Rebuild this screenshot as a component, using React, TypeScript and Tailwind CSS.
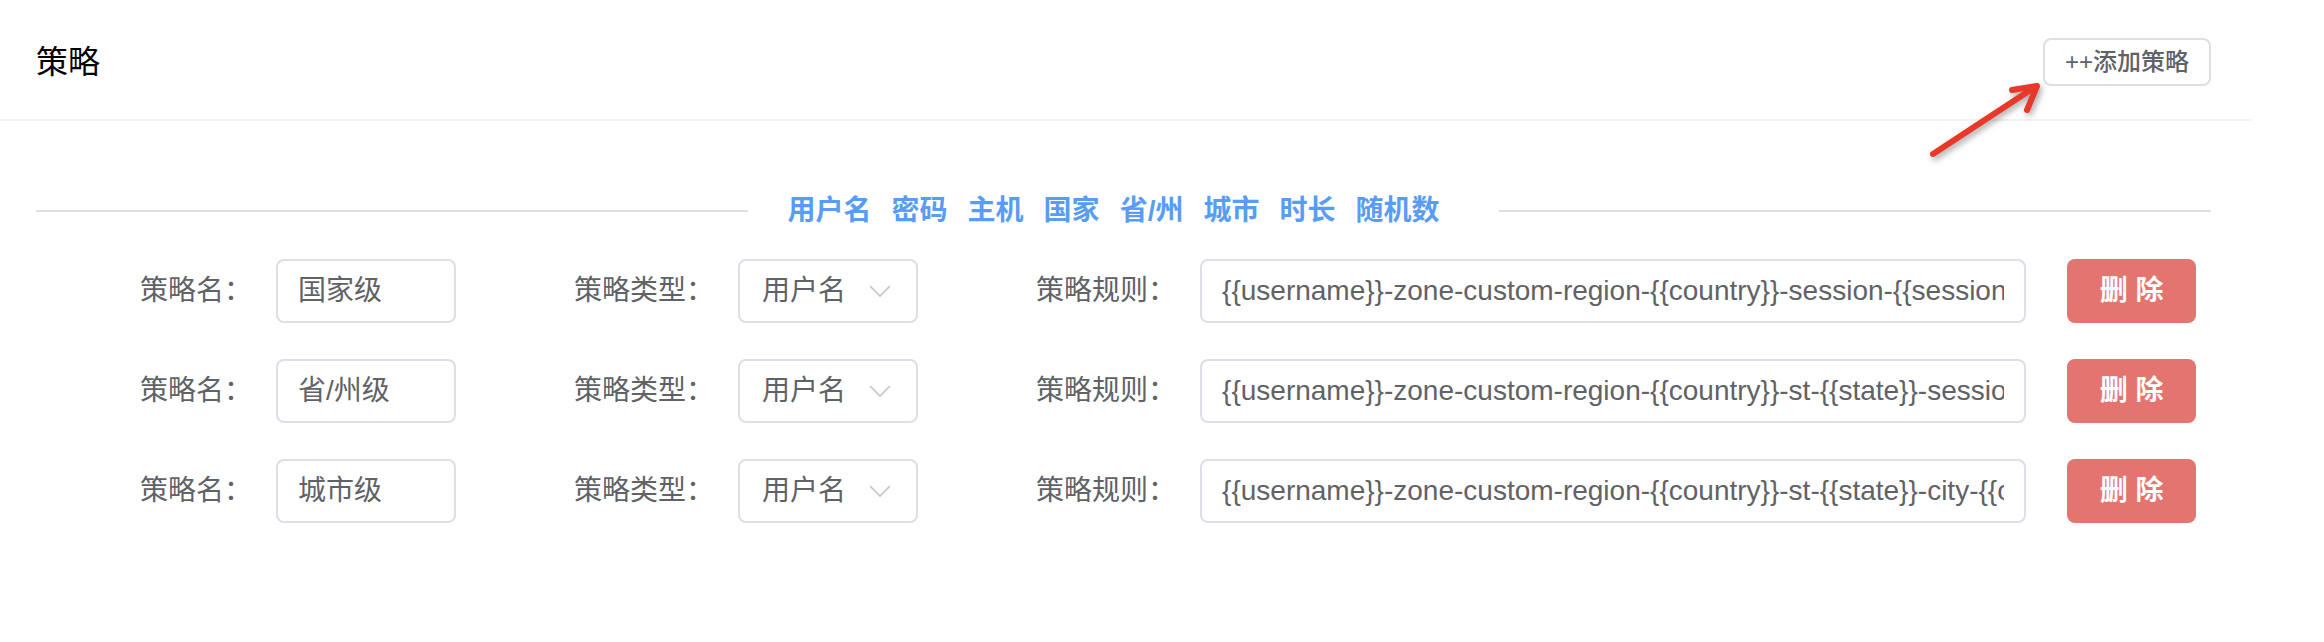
import React from "react";

const rules = [
  {
    name: "国家级",
    rule: "{{username}}-zone-custom-region-{{country}}-session-{{session}}-sessTime-{{time}}",
  },
  {
    name: "省/州级",
    rule: "{{username}}-zone-custom-region-{{country}}-st-{{state}}-session-{{session}}-sessTime-{{time}}",
  },
  {
    name: "城市级",
    rule: "{{username}}-zone-custom-region-{{country}}-st-{{state}}-city-{{city}}-session-{{session}}-sessTime-{{time}}",
  },
];

const variables = ["用户名", "密码", "主机", "国家", "省/州", "城市", "时长", "随机数"];

const App: React.FC = () => {
  return (
    <div className="min-h-screen bg-white font-['Liberation_Sans','Noto_Sans_CJK_SC',sans-serif]">
      <div className="relative w-[2252px]">
        {/* 头部 */}
        <div className="h-[121px] pt-[4px] pl-[36px] pr-[41px] border-b-2 border-[#f2f2f2] flex items-center justify-between">
          <h2 className="text-[32px] leading-[40px] text-black">策略</h2>
          <button className="h-[48px] px-[20px] border-2 border-[#dcdfe6] rounded-[8px] bg-white text-[24px] leading-[30px] font-medium text-[#606266]">
            ++添加策略
          </button>
        </div>

        {/* 变量分割线 */}
        <div className="pl-[36px] pr-[41px] pt-[70px]">
          <div className="h-[40px] flex items-center">
            <div className="flex-1 h-[2px] bg-[#dcdfe6]" />
            <div className="px-[40px] flex items-center">
              {variables.map((v) => (
                <span key={v} className="mr-[20px] text-[28px] leading-[40px] font-bold text-[#589cf6]">
                  {v}
                </span>
              ))}
            </div>
            <div className="flex-1 h-[2px] bg-[#dcdfe6]" />
          </div>

          {/* 策略列表 */}
          <div className="mt-[28px] flex flex-col gap-[36px]">
            {rules.map((r) => (
              <div key={r.name} className="h-[64px] flex items-center pl-[104px] text-[28px] text-[#606266]">
                <span className="pr-[24px] leading-[40px]">策略名：</span>
                <div className="w-[180px] h-[64px] border-2 border-[#dcdfe6] rounded-[8px] px-[20px] flex items-center">
                  <span className="leading-[40px] whitespace-nowrap">{r.name}</span>
                </div>

                <span className="ml-[118px] pr-[24px] leading-[40px]">策略类型：</span>
                <div className="w-[180px] h-[64px] border-2 border-[#dcdfe6] rounded-[8px] pl-[22px] pr-[25px] flex items-center justify-between">
                  <span className="leading-[40px]">用户名</span>
                  <svg width="22" height="12" viewBox="0 0 22 12" fill="none">
                    <polyline points="1,1 11,11 21,1" stroke="#c0c4cc" strokeWidth="1.6" />
                  </svg>
                </div>

                <span className="ml-[118px] pr-[24px] leading-[40px]">策略规则：</span>
                <div className="w-[826px] h-[64px] border-2 border-[#dcdfe6] rounded-[8px] px-[20px] flex items-center">
                  <div className="overflow-hidden whitespace-nowrap leading-[40px]">{r.rule}</div>
                </div>

                <button className="ml-[41px] w-[129px] h-[64px] rounded-[8px] bg-[#e4746f] text-white text-[28px] leading-[40px] font-semibold">
                  删 除
                </button>
              </div>
            ))}
          </div>
        </div>

        {/* 标注箭头 */}
        <svg
          className="absolute left-[1920px] top-[75px] drop-shadow-[2px_3px_3px_rgba(0,0,0,0.35)]"
          width="130"
          height="95"
          viewBox="0 0 130 95"
          fill="none"
        >
          <path d="M13 79 L115 12" stroke="#e8382a" strokeWidth="6" strokeLinecap="round" />
          <path d="M92 15 L117 11 L107 35" stroke="#e8382a" strokeWidth="6" strokeLinecap="round" strokeLinejoin="round" />
        </svg>
      </div>
    </div>
  );
};

export default App;
